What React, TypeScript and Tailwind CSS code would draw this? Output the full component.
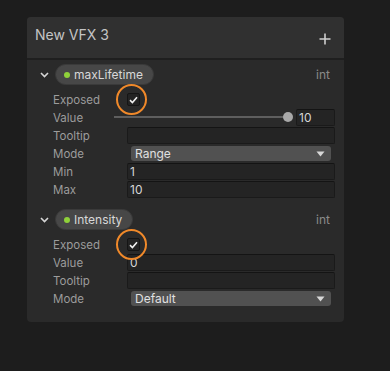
import React from "react";

function Chevron() {
  return (
    <svg width="9" height="6" viewBox="0 0 9 6" className="shrink-0">
      <path d="M1 1 L4.5 4.5 L8 1" fill="none" stroke="#d6d6d6" strokeWidth="1.6" />
    </svg>
  );
}

function Pill({ name }: { name: string }) {
  return (
    <div className="flex items-center h-[21px] rounded-full bg-[#474747] border border-[#3a3a3a] pl-[8px] pr-[10px] gap-[4px]">
      <span className="w-[6px] h-[6px] rounded-full bg-[#8fd13a]" />
      <span className="text-[12px] text-[#d8d8d8] leading-none pt-[1px]">{name}</span>
    </div>
  );
}

function Header({ name }: { name: string }) {
  return (
    <div className="flex items-center h-[21px] pl-[13px] pr-[14px]">
      <div className="w-[15px]">
        <Chevron />
      </div>
      <Pill name={name} />
      <span className="ml-auto text-[12px] text-[#8a8a8a]">int</span>
    </div>
  );
}

function Row({ label, children }: { label: string; children?: React.ReactNode }) {
  return (
    <div className="flex items-center h-[18px] pl-[26px] pr-[9px]">
      <span className="w-[74px] text-[11.5px] text-[#9c9c9c] leading-none pt-[3px]">{label}</span>
      <div className="flex-1 h-full flex items-center">{children}</div>
    </div>
  );
}

function Input({ value }: { value?: string }) {
  return (
    <div className="w-full h-[17px] rounded-[2px] bg-[#242424] border border-[#1a1a1a] border-t-[#141414] flex items-center px-[2px] pt-[2px] text-[12px] text-[#d6d6d6] leading-none">
      {value}
    </div>
  );
}

function Dropdown({ value }: { value: string }) {
  return (
    <div className="w-full mx-[4px] h-[15px] rounded-[3px] bg-[#515151] flex items-center px-[4px] pt-[1px] text-[12px] text-[#e0e0e0] leading-none">
      <span>{value}</span>
      <svg width="9" height="6" viewBox="0 0 9 6" className="ml-auto mr-[2px]">
        <path d="M0.5 0.5 H8.5 L4.5 5.5 Z" fill="#d8d8d8" />
      </svg>
    </div>
  );
}

function Exposed() {
  return (
    <Row label="Exposed">
      <div className="relative w-[13px] h-[13px] mt-[1px] rounded-[2px] bg-[#232323] border border-[#151515] flex items-center justify-center">
        <svg width="9" height="8" viewBox="0 0 9 8">
          <path d="M1 4.2 L3.4 6.5 L8 1.2" fill="none" stroke="#f0f0f0" strokeWidth="1.6" />
        </svg>
        <span className="absolute left-[-12px] top-[-10px] w-[31px] h-[31px] rounded-full border-[2.5px] border-[#f0892a]" />
      </div>
    </Row>
  );
}

export default function App() {
  return (
    <div className="w-[390px] h-[371px] bg-[#1d1d1d] pt-[17px] pl-[27px]" style={{ fontFamily: "Inter, 'Noto Sans', sans-serif" }}>
      <div className="w-[317px] h-[305px] rounded-[4px] bg-[#2a2a2a] overflow-hidden flex flex-col">
        <div className="h-[41px] bg-[#303030] flex items-start justify-between pl-[8px] pr-[13px]">
          <span className="mt-[7px] text-[14px] text-[#c4c4c4]">New VFX 3</span>
          <svg width="12" height="12" viewBox="0 0 12 12" className="mt-[16px]">
            <path d="M6 0.5 V11.5 M0.5 6 H11.5" stroke="#d0d0d0" strokeWidth="1.6" />
          </svg>
        </div>
        <div className="h-[2px] bg-[#1f1f1f]" />

        <div className="pt-[4px]">
          <Header name="maxLifetime" />
          <div className="pt-[5px]">
            <Exposed />
            <Row label="Value">
              <div className="flex flex-1 items-center -ml-[13px]">
                <div className="relative flex-1 h-[2px] bg-[#5e5e5e]">
                  <span className="absolute right-[-5px] top-[-4px] w-[10px] h-[10px] rounded-full bg-[#a8a8a8]" />
                </div>
                <div className="ml-[8px] w-[39px]">
                  <Input value="10" />
                </div>
              </div>
            </Row>
            <Row label="Tooltip">
              <Input />
            </Row>
            <Row label="Mode">
              <Dropdown value="Range" />
            </Row>
            <Row label="Min">
              <Input value="1" />
            </Row>
            <Row label="Max">
              <Input value="10" />
            </Row>
          </div>
        </div>

        <div className="pt-[11px]">
          <Header name="Intensity" />
          <div className="pt-[5px]">
            <Exposed />
            <Row label="Value">
              <Input value="0" />
            </Row>
            <Row label="Tooltip">
              <Input />
            </Row>
            <Row label="Mode">
              <Dropdown value="Default" />
            </Row>
          </div>
        </div>
      </div>
    </div>
  );
}
